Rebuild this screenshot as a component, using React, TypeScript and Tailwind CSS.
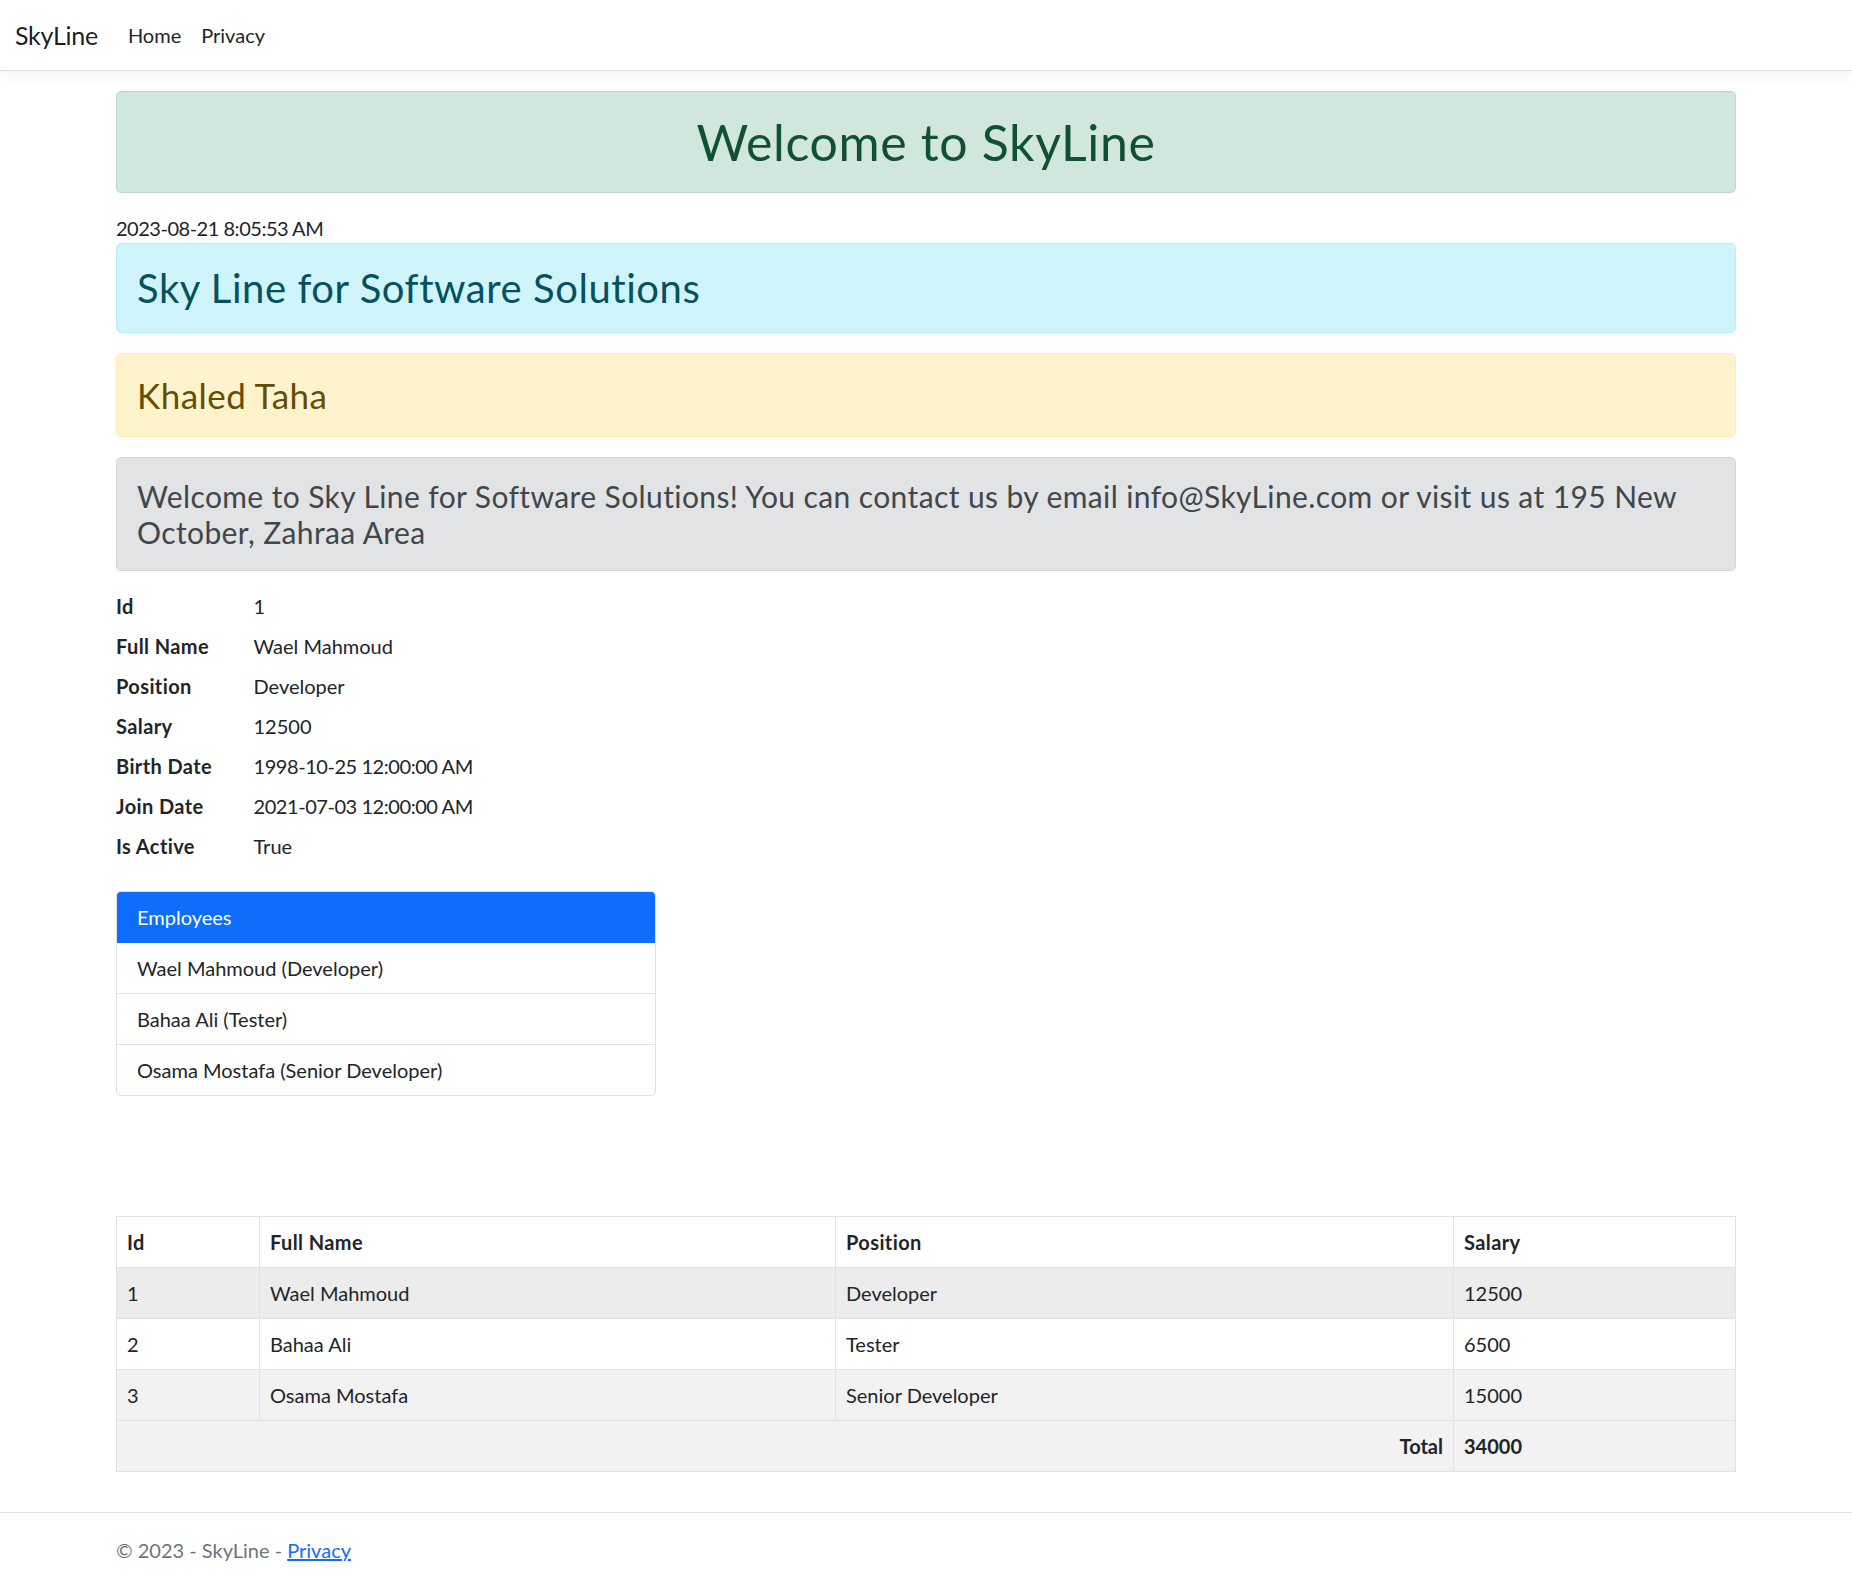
import React from "react";

const details: [string, string, boolean][] = [
  ["Id", "1", false],
  ["Full Name", "Wael Mahmoud", false],
  ["Position", "Developer", false],
  ["Salary", "12500", false],
  ["Birth Date", "1998-10-25 12:00:00 AM", true],
  ["Join Date", "2021-07-03 12:00:00 AM", true],
  ["Is Active", "True", false],
];

const employees = [
  { id: 1, name: "Wael Mahmoud", position: "Developer", salary: 12500 },
  { id: 2, name: "Bahaa Ali", position: "Tester", salary: 6500 },
  { id: 3, name: "Osama Mostafa", position: "Senior Developer", salary: 15000 },
];

export default function App() {
  return (
    <div className="min-h-screen bg-white text-[#212529] text-[20px] leading-[30px] font-['Lato','Noto_Sans',sans-serif]">
      <nav className="h-[71px] border-b border-[#dee2e6] bg-white shadow-[0_5px_15px_rgba(0,0,0,0.05)] flex items-center px-[15px] mb-[20px]">
        <span className="text-[25px] leading-[37px] mr-[20px] tracking-[-0.01em] text-[rgba(0,0,0,0.9)]">SkyLine</span>
        <span className="px-[10px] text-[#212529]">Home</span>
        <span className="px-[10px] text-[#212529]">Privacy</span>
      </nav>

      <main className="w-[1620px] mx-auto pb-[20px]">
        <div className="rounded-[5px] border border-[#badbcc] bg-[#d1e7dd] text-[#0f5132] p-[20px] mb-[20px]">
          <h1 className="text-center text-[50px] leading-[60px] font-normal tracking-[0.013em]">Welcome to SkyLine</h1>
        </div>

        <div className="leading-[30px] tracking-[-0.024em]">2023-08-21 8:05:53 AM</div>

        <div className="rounded-[5px] border border-[#b6effb] bg-[#cff4fc] text-[#055160] p-[20px] mb-[20px]">
          <h2 className="text-[40px] leading-[48px] font-normal tracking-[0.014em]">Sky Line for Software Solutions</h2>
        </div>

        <div className="rounded-[5px] border border-[#ffecb5] bg-[#fff3cd] text-[#664d03] p-[20px] mb-[20px]">
          <h3 className="text-[35px] leading-[42px] font-normal tracking-[0.013em]">Khaled Taha</h3>
        </div>

        <div className="rounded-[5px] border border-[#d3d6d8] bg-[#e2e3e5] text-[#41464b] p-[20px] mb-[20px]">
          <h4 className="text-[30px] leading-[36px] font-normal tracking-[0.013em]">
            Welcome to Sky Line for Software Solutions! You can contact us by email info@SkyLine.com or visit us at 195 New October, Zahraa Area
          </h4>
        </div>

        <dl className="grid grid-cols-[137.5px_1fr] mb-[20px]">
          {details.map(([k, v, num]) => (
            <React.Fragment key={k}>
              <dt className="font-bold mb-[10px] tracking-[0.02em]">{k}</dt>
              <dd className={num ? "mb-[10px] tracking-[-0.022em]" : "mb-[10px]"}>{v}</dd>
            </React.Fragment>
          ))}
        </dl>

        <ul className="w-[540px] rounded-[5px] border border-[#dee2e6] overflow-hidden">
          <li className="px-[20px] py-[10px] bg-[#0d6efd] text-white border-b border-[#0d6efd]">Employees</li>
          {employees.map((e, i) => (
            <li
              key={e.id}
              className={i < employees.length - 1 ? "px-[20px] py-[10px] border-b border-[#dee2e6]" : "px-[20px] py-[10px]"}
            >
              {e.name} ({e.position})
            </li>
          ))}
        </ul>

        <table className="w-full mt-[120px] mb-[20px] border-collapse border border-[#dee2e6]">
          <thead>
            <tr className="bg-white">
              <th className="w-[143px] text-left font-bold p-[10px] border border-[#dee2e6] tracking-[0.02em]">Id</th>
              <th className="w-[576px] text-left font-bold p-[10px] border border-[#dee2e6] tracking-[0.02em]">Full Name</th>
              <th className="w-[618px] text-left font-bold p-[10px] border border-[#dee2e6] tracking-[0.02em]">Position</th>
              <th className="text-left font-bold p-[10px] border border-[#dee2e6] tracking-[0.02em]">Salary</th>
            </tr>
          </thead>
          <tbody>
            {employees.map((e, i) => (
              <tr key={e.id} className={i === 0 ? "bg-[#ececec]" : i === 1 ? "bg-white" : "bg-[#f2f2f2]"}>
                <td className="p-[10px] border border-[#dee2e6]">{e.id}</td>
                <td className="p-[10px] border border-[#dee2e6]">{e.name}</td>
                <td className="p-[10px] border border-[#dee2e6]">{e.position}</td>
                <td className="p-[10px] border border-[#dee2e6]">{e.salary}</td>
              </tr>
            ))}
          </tbody>
          <tfoot>
            <tr className="bg-[#f2f2f2]">
              <td colSpan={3} className="p-[10px] border border-[#dee2e6] text-right font-bold">Total</td>
              <td className="p-[10px] border border-[#dee2e6] font-bold">34000</td>
            </tr>
          </tfoot>
        </table>
      </main>

      <footer className="border-t border-[#dee2e6] text-[#6c757d] leading-[74px]">
        <div className="w-[1620px] mx-auto whitespace-nowrap">
          © 2023 - SkyLine - <a className="text-[#0d6efd] underline">Privacy</a>
        </div>
      </footer>
    </div>
  );
}
